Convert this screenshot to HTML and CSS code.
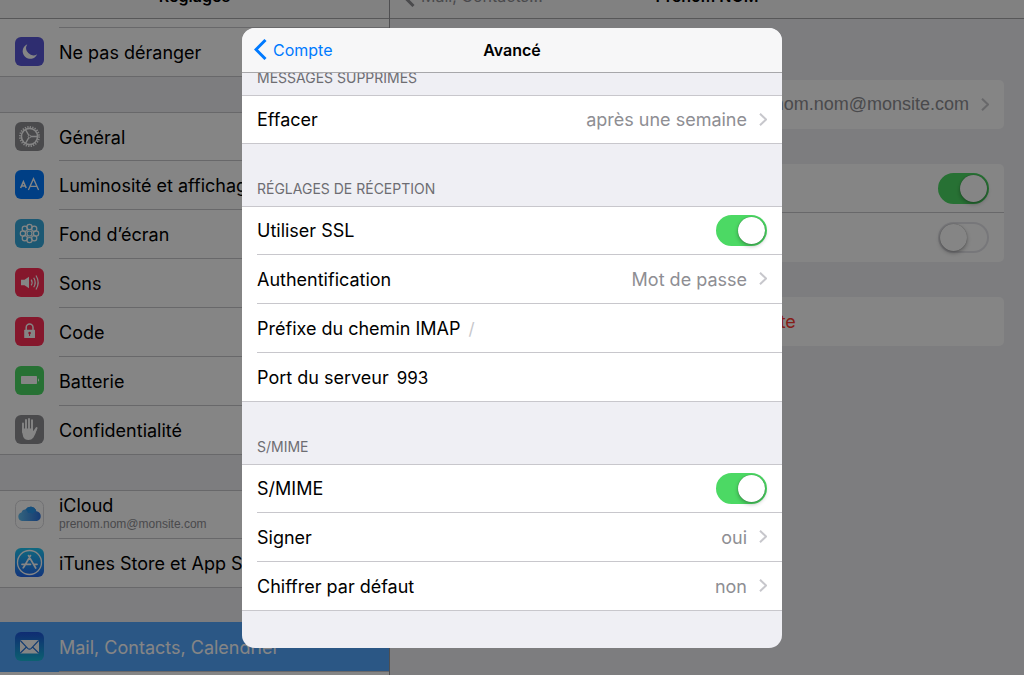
FILE: index.html
```html
<!DOCTYPE html>
<html lang="fr">
<head>
<meta charset="utf-8">
<meta name="viewport" content="width=device-width, initial-scale=1">
<title>Réglages</title>
<link rel="stylesheet" href="styles.css">
</head>
<body>
<div class="settings">
  <nav class="sidebar">
    <header class="bar"><h2 class="bar-title">Réglages</h2></header>
    <div class="group group-top">
      <div class="row row-cut"><span class="row-body"></span></div>
      <a class="row" href="#">
        <svg class="icon" viewBox="0 0 29 29"><rect width="29" height="29" rx="6" fill="#5856d6"/><path d="M12.300 7.200A7.600 7.600 0 1 0 22.200 17.300A7.300 7.300 0 0 1 12.300 7.200Z" fill="#fff"/></svg>
        <span class="row-body">Ne pas déranger</span>
      </a>
    </div>
    <div class="group">
      <a class="row" href="#">
        <svg class="icon" viewBox="0 0 29 29"><rect width="29" height="29" rx="6" fill="#8e8e93"/><g fill="none" stroke="#fff"><circle cx="14.500" cy="14.500" r="9.600" stroke-width="1.800" stroke-dasharray="1.256 1.257"/><circle cx="14.500" cy="14.500" r="8.100" stroke-width="1.600"/><circle cx="14.500" cy="14.500" r="1.300" stroke-width="1"/><path d="M15.800 14.500H22.300M13.800 13.400L10.500 7.600M13.800 15.600L10.500 21.400" stroke-width="1.300"/></g></svg>
        <span class="row-body">Général</span>
      </a>
      <a class="row" href="#">
        <svg class="icon" viewBox="0 0 29 29"><rect width="29" height="29" rx="6" fill="#007aff"/><g fill="none" stroke="#fff"><path d="M5.600 18L8.400 11.700L11.200 18M6.500 16H10.300" stroke-width="1.500"/><path d="M13.400 20L18.500 8.700L23.600 20M15.200 16.300H21.800" stroke-width="1.300"/></g></svg>
        <span class="row-body">Luminosité et affichage</span>
      </a>
      <a class="row" href="#">
        <svg class="icon" viewBox="0 0 29 29"><rect width="29" height="29" rx="6" fill="#36aadc"/><g fill="none" stroke="#fff" stroke-width="1.200"><circle cx="14.500" cy="14.500" r="2.500"/><circle cx="14.500" cy="7.900" r="2.600"/><circle cx="19.200" cy="9.800" r="2.600"/><circle cx="21.100" cy="14.500" r="2.600"/><circle cx="19.200" cy="19.200" r="2.600"/><circle cx="14.500" cy="21.100" r="2.600"/><circle cx="9.800" cy="19.200" r="2.600"/><circle cx="7.900" cy="14.500" r="2.600"/><circle cx="9.800" cy="9.800" r="2.600"/></g></svg>
        <span class="row-body">Fond d’écran</span>
      </a>
      <a class="row" href="#">
        <svg class="icon" viewBox="0 0 29 29"><rect width="29" height="29" rx="6" fill="#ff2d55"/><path d="M6 11.700H9.500L14 8.800V20.200L9.500 17.300H6Z" fill="#fff"/><g fill="none" stroke="#fff" stroke-width="1.200"><path d="M16.200 11.600Q18 14.500 16.200 17.400M18.700 9.700Q21.700 14.500 18.700 19.300M21 7.500Q25.300 14.500 21 21.500"/></g></svg>
        <span class="row-body">Sons</span>
      </a>
      <a class="row" href="#">
        <svg class="icon" viewBox="0 0 29 29"><rect width="29" height="29" rx="6" fill="#ff2d55"/><path d="M11.200 13.500V10.500a3.400 3.400 0 0 1 6.800 0V13.500" fill="none" stroke="#fff" stroke-width="1.500"/><rect x="9.200" y="12.800" width="10.800" height="8.200" rx=".5" fill="#fff"/><circle cx="14.600" cy="16" r="1.300" fill="#ff2d55"/><path d="M14.600 16V19" stroke="#ff2d55"/></svg>
        <span class="row-body">Code</span>
      </a>
      <a class="row" href="#">
        <svg class="icon" viewBox="0 0 29 29"><rect width="29" height="29" rx="6" fill="#4cd964"/><rect x="6" y="10" width="16" height="8" rx=".7" fill="#fff"/><path d="M23 12.200Q25.300 14 23 15.800Z" fill="#fff"/></svg>
        <span class="row-body">Batterie</span>
      </a>
      <a class="row" href="#">
        <svg class="icon" viewBox="0 0 29 29"><rect width="29" height="29" rx="6" fill="#8e8e93"/><g fill="none" stroke="#fff" stroke-width="1.900" stroke-linecap="round"><path d="M8 8.500V17M11 5V15M14 3.900V15M17 5.200V16M21.600 13L18.500 18.500"/></g><path d="M7.100 13.500H17.900V16.300L20.700 13.600L22 14.200Q20.200 20 18.300 22.700Q16.500 25 13.500 25Q9.700 25 8.200 21.700Q7.100 19 7.100 13.500Z" fill="#fff"/></svg>
        <span class="row-body">Confidentialité</span>
      </a>
    </div>
    <div class="group">
      <a class="row" href="#">
        <svg class="icon" viewBox="0 0 29 29"><defs><linearGradient id="cloud"><stop offset="0" stop-color="#62bff0"/><stop offset="1" stop-color="#2a72df"/></linearGradient></defs><rect x=".5" y=".5" width="28" height="28" rx="6" fill="#fff" stroke="#d8d8dc"/><path d="M7 21a4.300 4.300 0 0 1-.5-8.400A4 4 0 0 1 10.500 9.500A6 6 0 0 1 21.300 11.200A5 5 0 0 1 22 21Z" fill="url(#cloud)"/><path d="M10.500 9.500A6 6 0 0 1 21.300 11.200Q18.700 11.500 17.500 14Q15.500 12 13 13Q12.500 10.500 10.500 9.500Z" fill="#2997ed"/></svg>
        <span class="row-body stacked"><span>iCloud</span><small class="sub">prenom.nom@monsite.com</small></span>
      </a>
      <a class="row" href="#">
        <svg class="icon" viewBox="0 0 29 29"><defs><linearGradient id="store" x2="0" y2="1"><stop offset="0" stop-color="#1fc8f5"/><stop offset="1" stop-color="#2467ed"/></linearGradient></defs><rect width="29" height="29" rx="6" fill="url(#store)"/><g fill="none" stroke="#fff" stroke-linecap="round"><circle cx="14.500" cy="14.500" r="12" stroke-width="1.300"/><path d="M15.500 7.600L9 18.800M13.500 7.600L20.700 20M7 16.300H15.500M18.700 16.300H22M8.200 19.800L9 18.800" stroke-width="1.700"/></g></svg>
        <span class="row-body">iTunes Store et App Store</span>
      </a>
    </div>
    <div class="group group-selected">
      <a class="row" href="#" aria-current="page">
        <svg class="icon" viewBox="0 0 29 29"><defs><linearGradient id="mail" x2="0" y2="1"><stop offset="0" stop-color="#1d55dc"/><stop offset="1" stop-color="#19b9d8"/></linearGradient></defs><rect width="29" height="29" rx="6" fill="url(#mail)"/><rect x="5" y="8" width="19" height="13.500" rx="1" fill="#fff"/><path d="M5.300 8.500L12.700 16.300Q14.500 18 16.300 16.300L23.700 8.500M5.300 21L11.500 15M23.700 21L17.500 15" fill="none" stroke="#1f6fd8" stroke-width="1.100"/></svg>
        <span class="row-body">Mail, Contacts, Calendrier</span>
      </a>
      <div class="row row-next"></div>
    </div>
  </nav>

  <main class="detail">
    <header class="bar detail-bar">
      <a class="bar-back" href="#"><svg class="back-arrow" viewBox="0 0 13 21"><path d="M11.500 1L2 10.500L11.500 20" fill="none" stroke="currentColor" stroke-width="3"/></svg>Mail, Contacts...</a>
      <h2 class="bar-title">Prénom NOM</h2>
      <span></span>
    </header>
    <div class="cards">
      <a class="card card-row" href="#"><span class="mail">prenom.nom@monsite.com</span><svg class="chevron" viewBox="0 0 8 13"><path d="M1 .7L7 6.500L1 12.300" fill="none" stroke="currentColor" stroke-width="2"/></svg></a>
      <div class="card">
        <div class="card-row"><input class="switch" type="checkbox" role="switch" aria-label="Mail" checked></div>
        <div class="card-row"><input class="switch" type="checkbox" role="switch" aria-label="Notes"></div>
      </div>
      <button class="card card-row delete" type="button">Supprimer le compte</button>
    </div>
  </main>
</div>

<div class="backdrop">
  <section class="sheet" role="dialog" aria-modal="true" aria-labelledby="sheet-title">
    <header class="sheet-bar">
      <button class="sheet-back" type="button"><svg class="back-arrow" viewBox="0 0 13 21"><path d="M11.500 1L2 10.500L11.500 20" fill="none" stroke="currentColor" stroke-width="3"/></svg>Compte</button>
      <h1 class="sheet-title" id="sheet-title">Avancé</h1>
      <span></span>
    </header>

    <h2 class="section section-cut">MESSAGES SUPPRIMES</h2>
    <div class="list">
      <button class="item" type="button"><span>Effacer</span><span class="value">après une semaine</span><svg class="chevron" viewBox="0 0 8 13"><path d="M1 .7L7 6.500L1 12.300" fill="none" stroke="currentColor" stroke-width="2"/></svg></button>
    </div>

    <h2 class="section">RÉGLAGES DE RÉCEPTION</h2>
    <div class="list">
      <div class="item"><label for="ssl">Utiliser SSL</label><input class="switch" id="ssl" type="checkbox" role="switch" checked></div>
      <button class="item" type="button"><span>Authentification</span><span class="value">Mot de passe</span><svg class="chevron" viewBox="0 0 8 13"><path d="M1 .7L7 6.500L1 12.300" fill="none" stroke="currentColor" stroke-width="2"/></svg></button>
      <div class="item"><label for="prefix">Préfixe du chemin IMAP</label><input class="field" id="prefix" type="text" placeholder="/"></div>
      <div class="item"><label for="port">Port du serveur</label><input class="field" id="port" type="text" inputmode="numeric" value="993"></div>
    </div>

    <h2 class="section">S/MIME</h2>
    <div class="list">
      <div class="item"><label for="smime">S/MIME</label><input class="switch" id="smime" type="checkbox" role="switch" checked></div>
      <button class="item" type="button"><span>Signer</span><span class="value">oui</span><svg class="chevron" viewBox="0 0 8 13"><path d="M1 .7L7 6.500L1 12.300" fill="none" stroke="currentColor" stroke-width="2"/></svg></button>
      <button class="item" type="button"><span>Chiffrer par défaut</span><span class="value">non</span><svg class="chevron" viewBox="0 0 8 13"><path d="M1 .7L7 6.500L1 12.300" fill="none" stroke="currentColor" stroke-width="2"/></svg></button>
    </div>
  </section>
</div>
</body>
</html>
```
FILE: styles.css
```css
*, *::before { box-sizing: border-box; }

body {
  margin: 0;
  height: 100vh;
  overflow: hidden;
  font-family: Inter, "Liberation Sans", sans-serif;
  font-size: 18px;
  line-height: 20px;
  color: #000;
  background: #efeff4;
}

h1, h2 { margin: 0; }
a { color: inherit; text-decoration: none; }
button, input { margin: 0; padding: 0; border: 0; font: inherit; color: inherit; background: none; }
svg { display: block; flex: none; }

.settings { display: grid; grid-template-columns: 390px 1fr; height: 100vh; }

.sidebar { border-right: 1px solid #97979b; overflow: hidden; white-space: nowrap; }

.bar {
  display: flex;
  align-items: flex-end;
  justify-content: center;
  height: 19px;
  padding-bottom: 12px;
  overflow: hidden;
  background: #f7f7f8;
  border-bottom: 1px solid #a7a7aa;
}
.bar-title { font-size: 16px; line-height: 20px; font-weight: 600; }

.group { margin-top: 35px; background: #fff; border-top: 1px solid #c8c7cc; border-bottom: 1px solid #c8c7cc; }
.group-top { margin-top: 0; border-top: 0; }
.group-selected { margin-top: 34px; border-color: #53a7ff; background: #53a7ff; color: #fff; }

.row { display: flex; align-items: center; gap: 15px; height: 49px; padding-left: 15px; }
.row:first-child, .row:last-child { height: 48px; }
.row-body { display: flex; flex: 1; align-items: center; align-self: stretch; padding-top: 2px; border-bottom: 1px solid #c8c7cc; }
.row:last-child .row-body { border-bottom: 0; }
.row.row-cut { height: 9px; padding-left: 59px; }
.group-selected .row:first-child { height: 49px; }
.row.row-next { background: #fff; }
.icon { width: 29px; height: 29px; margin-bottom: 2px; }
.row-body.stacked { flex-direction: column; align-items: flex-start; justify-content: center; gap: 1px; padding: 0 0 2px; }
.sub { font-family: "Liberation Sans", Arial, sans-serif; font-size: 12px; line-height: 14px; color: #8e8e93; }

.detail-bar { display: grid; grid-template-columns: 1fr auto 1fr; align-items: center; align-content: end; padding-left: 12px; padding-right: 12px; }
.bar-back { display: flex; align-items: center; gap: 6px; height: 20px; font-size: 16px; color: #8e8e93; }
.back-arrow { width: 13px; height: 21px; }

.cards { display: flex; flex-direction: column; gap: 35px; padding: 61px 20px 0; }
.card { background: #fff; border-radius: 5px; }
.card-row { display: flex; align-items: center; justify-content: flex-end; gap: 12px; height: 49px; padding: 0 15px; }
.card-row:first-child:not(.card) { height: 48px; }
.card-row + .card-row { height: 50px; border-top: 1px solid #c8c7cc; }
.mail { padding-bottom: 2px; font-family: "Liberation Sans", Arial, sans-serif; color: #8e8e93; }
.delete { justify-content: center; color: #ff3b30; }
.chevron { width: 8px; height: 13px; color: #c7c7cc; }

.switch {
  appearance: none;
  flex: none;
  width: 51px;
  height: 31px;
  border: 2px solid #e5e5ea;
  border-radius: 16px;
  background: #fff;
}
.switch::before {
  content: "";
  display: block;
  width: 27px;
  height: 27px;
  border-radius: 50%;
  background: #fff;
  box-shadow: 0 2px 4px rgba(0, 0, 0, .3), 0 0 1px rgba(0, 0, 0, .4);
}
.switch:checked { border-color: #4cd964; background: #4cd964; }
.switch:checked::before { margin-left: auto; }

.backdrop {
  position: fixed;
  inset: 0;
  display: flex;
  align-items: center;
  justify-content: center;
  background: rgba(0, 0, 0, .48);
}
.sheet { width: 540px; max-width: 100%; padding-bottom: 37px; overflow: hidden; border-radius: 13px; background: #efeff4; }
.sheet-bar {
  display: grid;
  grid-template-columns: 1fr auto 1fr;
  align-items: center;
  height: 45px;
  padding: 0 12px;
  background: #f7f7f8;
  border-bottom: 1px solid #a7a7aa;
}
.sheet-back { display: flex; align-items: center; gap: 6px; font-size: 16px; color: #007aff; }
.sheet-title { font-size: 16px; font-weight: 600; }

.section {
  display: flex;
  align-items: flex-end;
  height: 62px;
  padding: 0 15px 7px;
  font-size: 14px;
  font-weight: 400;
  color: #6d6d72;
}
.section-cut { height: 22px; overflow: hidden; }

.list { background: #fff; border-top: 1px solid #c8c7cc; border-bottom: 1px solid #c8c7cc; padding-left: 15px; }
.item { display: flex; align-items: center; gap: 8px; width: 100%; height: 49px; padding-right: 15px; border-bottom: 1px solid #c8c7cc; text-align: left; }
.item:first-child { height: 48px; }
.item:last-child { height: 48px; border-bottom: 0; }
.item:only-child { height: 47px; }
.item label, .item span, .field { padding-top: 2px; }
.item .switch, .value { margin-left: auto; }
.value { color: #8e8e93; }
.item .chevron { margin-left: 4px; }
.field { flex: 1; min-width: 0; font-size: 17px; }
.field::placeholder { color: #c7c7cc; opacity: 1; }
```
